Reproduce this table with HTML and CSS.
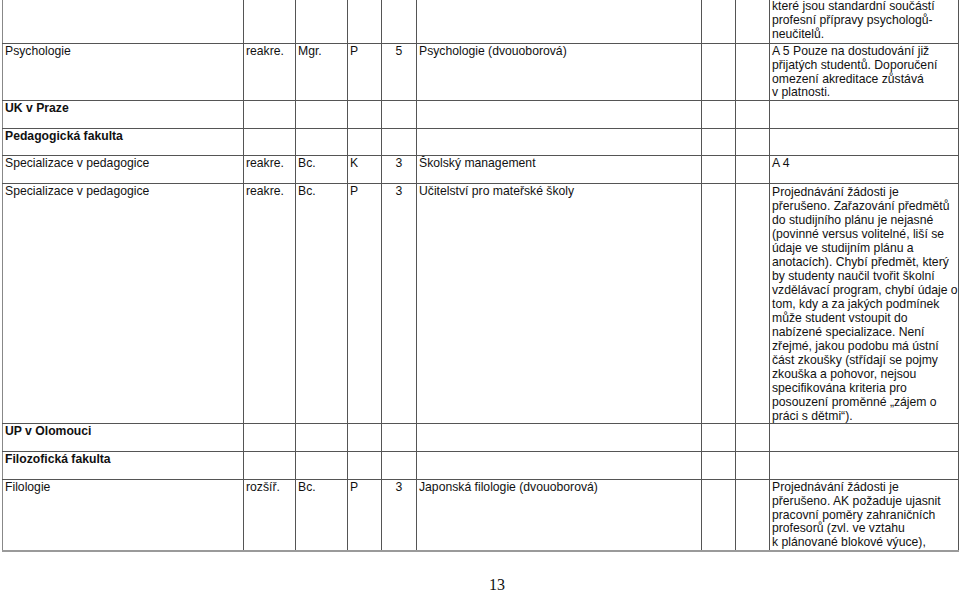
FILE: index.html
```html
<!DOCTYPE html>
<html lang="cs">
<head>
<meta charset="utf-8">
<title>Akreditace</title>
<link rel="stylesheet" href="styles.css">
</head>
<body>
<table class="grid">
  <colgroup>
    <col class="c-name"><col class="c-type"><col class="c-deg"><col class="c-form"><col class="c-len"><col class="c-field"><col class="c-e1"><col class="c-e2"><col class="c-note">
  </colgroup>
  <tr class="r-top">
    <td></td><td></td><td></td><td></td><td></td><td></td><td></td><td></td>
    <td class="note">které jsou standardní součástí<br>profesní přípravy psychologů-<br>neučitelů.</td>
  </tr>
  <tr class="r-4">
    <td>Psychologie</td><td>reakre.</td><td>Mgr.</td><td>P</td><td class="num">5</td><td>Psychologie (dvouoborová)</td><td></td><td></td>
    <td class="note">A 5 Pouze na dostudování již<br>přijatých studentů. Doporučení<br>omezení akreditace zůstává<br>v&nbsp;platnosti.</td>
  </tr>
  <tr class="r-2">
    <td class="b">UK v Praze</td><td></td><td></td><td></td><td></td><td></td><td></td><td></td><td></td>
  </tr>
  <tr class="r-2s">
    <td class="b">Pedagogická fakulta</td><td></td><td></td><td></td><td></td><td></td><td></td><td></td><td></td>
  </tr>
  <tr class="r-2">
    <td>Specializace v pedagogice</td><td>reakre.</td><td>Bc.</td><td>K</td><td class="num">3</td><td>Školský management</td><td></td><td></td>
    <td class="note">A 4</td>
  </tr>
  <tr class="r-17">
    <td>Specializace v pedagogice</td><td>reakre.</td><td>Bc.</td><td>P</td><td class="num">3</td><td>Učitelství pro mateřské školy</td><td></td><td></td>
    <td class="note">Projednávání žádosti je<br>přerušeno. Zařazování předmětů<br>do studijního plánu je nejasné<br>(povinné versus volitelné, liší se<br>údaje ve studijním plánu a<br>anotacích). Chybí předmět, který<br>by studenty naučil tvořit školní<br>vzdělávací program, chybí údaje o<br>tom, kdy a za jakých podmínek<br>může student vstoupit do<br>nabízené specializace. Není<br>zřejmé, jakou podobu má ústní<br>část zkoušky (střídají se pojmy<br>zkouška a pohovor, nejsou<br>specifikována kriteria pro<br>posouzení proměnné „zájem o<br>práci s dětmi“).</td>
  </tr>
  <tr class="r-2">
    <td class="b">UP v Olomouci</td><td></td><td></td><td></td><td></td><td></td><td></td><td></td><td></td>
  </tr>
  <tr class="r-2">
    <td class="b">Filozofická fakulta</td><td></td><td></td><td></td><td></td><td></td><td></td><td></td><td></td>
  </tr>
  <tr class="r-5 last">
    <td>Filologie</td><td>rozšíř.</td><td>Bc.</td><td>P</td><td class="num">3</td><td>Japonská filologie (dvouoborová)</td><td></td><td></td>
    <td class="note">Projednávání žádosti je<br>přerušeno. AK požaduje ujasnit<br>pracovní poměry zahraničních<br>profesorů (zvl. ve vztahu<br>k&nbsp;plánované blokové výuce),</td>
  </tr>
</table>
<div class="pageno">13</div>
</body>
</html>
```
FILE: styles.css
```css
html, body {
  margin: 0;
  padding: 0;
  background: #ffffff;
}
body {
  width: 960px;
  height: 593px;
  overflow: hidden;
  font-family: "Liberation Sans", Arial, sans-serif;
  color: #111;
}
.grid {
  border-collapse: collapse;
  table-layout: fixed;
  width: 956px;
  margin: -2px 0 0 2px;
  font-size: 12.2px;
  line-height: 13.75px;
}
.c-name { width: 241px; }
.c-type { width: 52px; }
.c-deg { width: 52px; }
.c-form { width: 34px; }
.c-len { width: 35px; }
.c-field { width: 285px; }
.c-e1 { width: 34px; }
.c-e2 { width: 34px; }
.c-note { width: 189px; }
.grid td {
  border: 1px solid #555;
  padding: 1px 2px 0 2px;
  vertical-align: top;
  white-space: nowrap;
  overflow: hidden;
}
.grid td.num { text-align: center; }
.grid td.b { font-weight: bold; }
.grid .last td { border-bottom: 2px solid #9a9a9a; }
.grid tr > td:first-child { border-left-color: #888; }
.r-top td { height: 43px; }
.r-4 td { height: 55px; }
.r-2 td { height: 26px; }
.r-2s td { height: 25px; }
.r-17 td { height: 238px; }
.r-17 td.note { line-height: 14px; }
.r-5 td { height: 69px; }
.pageno {
  font-family: "Liberation Serif", "Times New Roman", serif;
  font-size: 16px;
  line-height: 18px;
  margin: 24px 0 0 489px;
  color: #111;
}
```
